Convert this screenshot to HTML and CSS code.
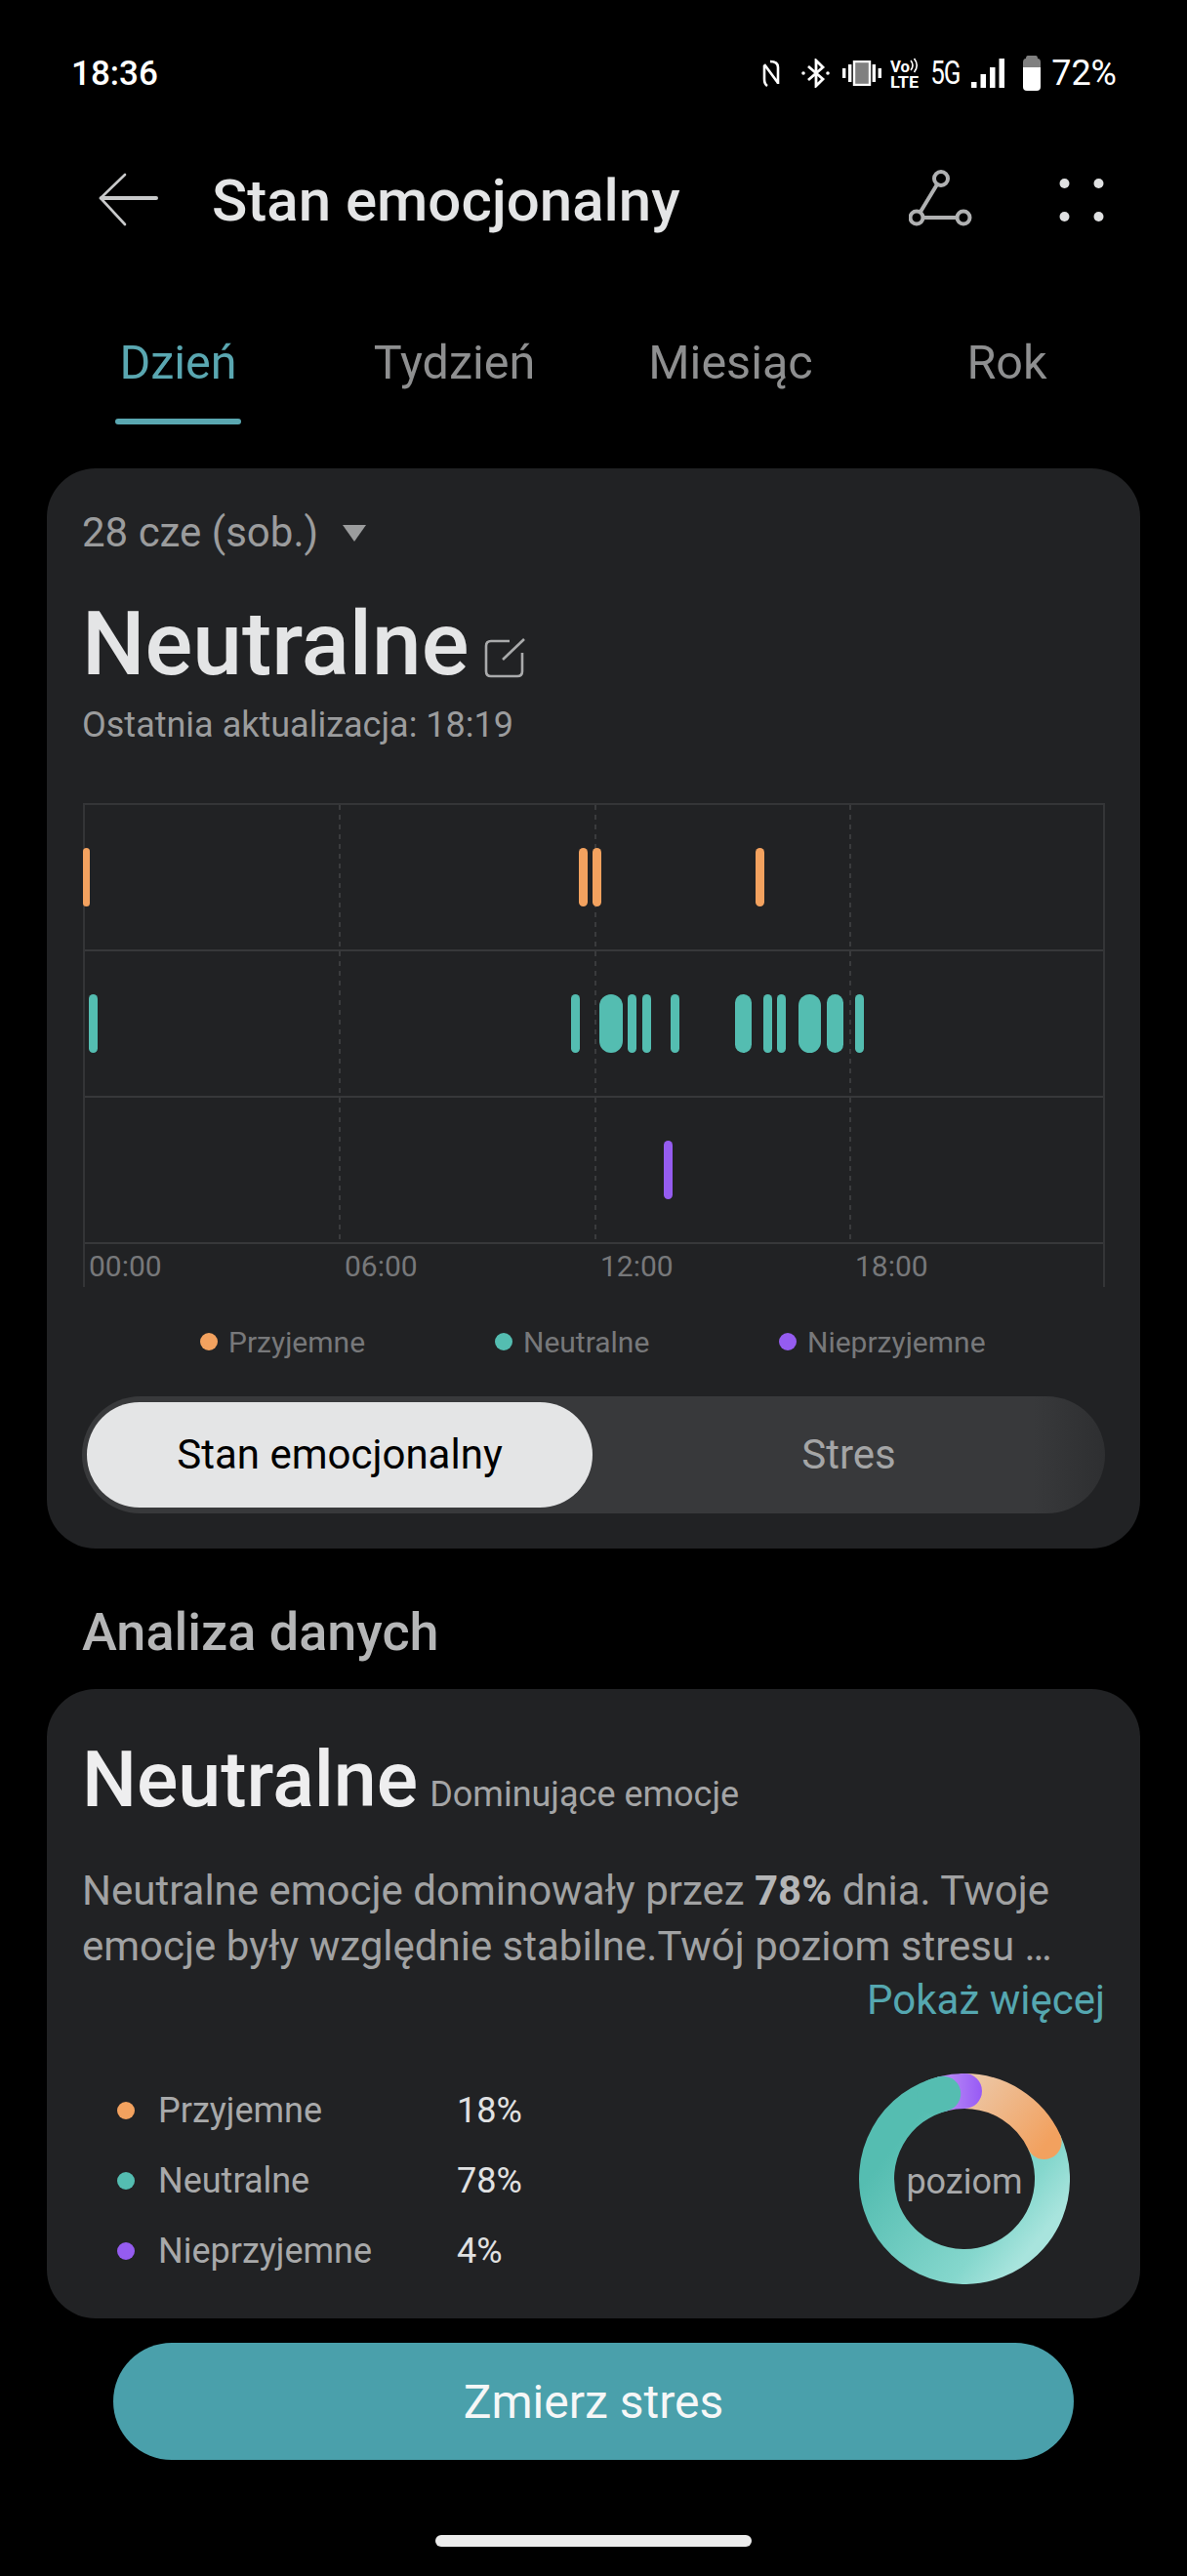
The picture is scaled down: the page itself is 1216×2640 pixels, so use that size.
FILE: index.html
```html
<!DOCTYPE html>
<html lang="pl">
  <head>
    <meta charset="UTF-8" />
    <title>Stan emocjonalny</title>
    <link rel="stylesheet" href="styles.css">
  </head>
  <body>
    <div class="status">
      <span class="time">18:36</span>
      <div class="status-icons">
        <svg class="ic-nfc" width="18" height="28" viewBox="0 0 18 28" fill="none" stroke="#fff" stroke-width="2.6">
          <path d="M2 6V20Q2 25 5 27M2 5L16 24M8 2Q16 2 16 8V25" />
        </svg>
        <svg class="ic-bt" width="29" height="30" viewBox="0 0 29 30" fill="none" stroke="#fff" stroke-width="2.8">
          <path d="M7 8L22 21L15 28V2L22 9L7 22" />
          <circle cx="2" cy="15" r="1.8" fill="#fff" stroke="none" />
          <circle cx="27" cy="15" r="1.8" fill="#fff" stroke="none" />
        </svg>
        <svg class="ic-vib" width="40" height="26" viewBox="0 0 40 26">
          <rect x="12" y="1" width="16" height="24" fill="#808080" stroke="#fff" stroke-width="2.4" />
          <rect x="0" y="8" width="3.4" height="10" fill="#fff" />
          <rect x="6" y="4" width="3.4" height="18" fill="#fff" />
          <rect x="30.6" y="4" width="3.4" height="18" fill="#fff" />
          <rect x="36.6" y="8" width="3.4" height="10" fill="#fff" />
        </svg>
        <svg class="ic-volte" width="29" height="40" viewBox="0 0 29 40">
          <text x="0" y="19" class="volte-text" textLength="20" lengthAdjust="spacingAndGlyphs">Vo</text>
          <text x="0" y="35" class="volte-text" textLength="29" lengthAdjust="spacingAndGlyphs">LTE</text>
          <path d="M21 7Q25 12 21 17M24.500 5Q30 12 24.500 19" fill="none" stroke="#fff" stroke-width="1.6" />
        </svg>
        <span class="fiveg">5G</span>
        <svg class="ic-signal" width="34" height="30" viewBox="0 0 34 30" fill="#fff">
          <rect x="0" y="24" width="5.500" height="6" />
          <rect x="9.500" y="16" width="5.500" height="14" />
          <rect x="19" y="9" width="5.500" height="21" />
          <rect x="28.500" y="0" width="5.500" height="30" />
        </svg>
        <svg class="ic-battery" width="18" height="36" viewBox="0 0 18 36">
          <path d="M5 0H13Q15 0 15 3Q18 3 18 7V12H0V7Q0 3 3 3Q3 0 5 0Z" fill="#808080" />
          <path d="M0 12H18V32Q18 36 14 36H4Q0 36 0 32Z" fill="#fff" />
        </svg>
        <span class="battery-pct">72%</span>
      </div>
    </div>

    <header class="topbar">
      <svg class="back" width="62" height="56" viewBox="0 0 62 56" fill="none" stroke="#c8c9ca" stroke-linecap="round">
        <path d="M3 26H59" stroke-width="4" />
        <path d="M27 2L2 26L27 53" stroke-width="2.6" />
      </svg>
      <h1 class="page-title">Stan emocjonalny</h1>
      <svg class="share" width="66" height="60" viewBox="0 0 66 60" fill="none" stroke="#b0b1b2" stroke-width="4">
        <circle cx="33" cy="10" r="7" />
        <circle cx="8" cy="50" r="6.500" />
        <circle cx="56" cy="50" r="6.500" />
        <path d="M29 16L12 44M15 50H49" />
      </svg>
      <svg class="more" width="46" height="44" viewBox="0 0 46 44" fill="#e0e1e2">
        <circle cx="5.500" cy="5" r="5" />
        <circle cx="40.500" cy="5" r="5" />
        <circle cx="5.500" cy="39" r="5" />
        <circle cx="40.500" cy="39" r="5" />
      </svg>
    </header>

    <nav class="tabs">
      <div class="tab active"><span>Dzień</span></div>
      <div class="tab"><span>Tydzień</span></div>
      <div class="tab"><span>Miesiąc</span></div>
      <div class="tab"><span>Rok</span></div>
    </nav>

    <section class="card card-chart">
      <div class="date">28 cze (sob.)<i class="caret"></i></div>
      <div class="mood">
        <h2 class="mood-name">Neutralne</h2>
        <svg class="edit" width="42" height="41" viewBox="0 0 42 41" fill="none" stroke="#a9aaab" stroke-width="2.600">
          <path d="M26 3H7Q2 3 2 8V34Q2 39 7 39H34Q39 39 39 34V15" />
          <path d="M19 22L41 1" />
        </svg>
      </div>
      <p class="updated">Ostatnia aktualizacja: 18:19</p>

      <div class="chart">
        <div class="vline" style="left: 260px"></div>
        <div class="vline" style="left: 522px"></div>
        <div class="vline" style="left: 783px"></div>
        <div class="row">
          <b class="bar orange" style="left: -2px; width: 7px"></b>
          <b class="bar orange" style="left: 506px; width: 9px"></b>
          <b class="bar orange" style="left: 520px; width: 9px"></b>
          <b class="bar orange" style="left: 687px; width: 9px"></b>
        </div>
        <div class="row">
          <b class="bar teal" style="left: 4px; width: 9px"></b>
          <b class="bar teal" style="left: 498px; width: 9px"></b>
          <b class="bar teal wide" style="left: 527px; width: 24px"></b>
          <b class="bar teal" style="left: 556px; width: 9px"></b>
          <b class="bar teal" style="left: 571px; width: 9px"></b>
          <b class="bar teal" style="left: 600px; width: 9px"></b>
          <b class="bar teal wide" style="left: 666px; width: 17px"></b>
          <b class="bar teal" style="left: 695px; width: 9px"></b>
          <b class="bar teal" style="left: 709px; width: 9px"></b>
          <b class="bar teal wide" style="left: 731px; width: 23px"></b>
          <b class="bar teal wide" style="left: 760px; width: 17px"></b>
          <b class="bar teal" style="left: 789px; width: 9px"></b>
        </div>
        <div class="row">
          <b class="bar purple" style="left: 593px; width: 9px"></b>
        </div>
        <div class="axis">
          <span>00:00</span>
          <span>06:00</span>
          <span>12:00</span>
          <span>18:00</span>
        </div>
      </div>

      <div class="legend">
        <span class="legend-item first"><i class="dot orange"></i>Przyjemne</span>
        <span class="legend-item second"><i class="dot teal"></i>Neutralne</span>
        <span class="legend-item"><i class="dot purple"></i>Nieprzyjemne</span>
      </div>

      <div class="segment">
        <div class="seg-item on">Stan emocjonalny</div>
        <div class="seg-item">Stres</div>
      </div>
    </section>

    <h3 class="section-title">Analiza danych</h3>

    <section class="card card-analysis">
      <div class="dominant">
        <h2 class="dominant-name">Neutralne</h2>
        <span class="dominant-label">Dominujące emocje</span>
      </div>
      <p class="summary">Neutralne emocje dominowały przez <strong>78%</strong> dnia. Twoje<br />emocje były względnie stabilne.Twój poziom stresu …</p>
      <div class="more-link">Pokaż więcej</div>

      <div class="stats">
        <ul class="stat-list">
          <li><i class="dot orange"></i><span class="stat-name">Przyjemne</span><span class="stat-val">18%</span></li>
          <li><i class="dot teal"></i><span class="stat-name">Neutralne</span><span class="stat-val">78%</span></li>
          <li><i class="dot purple"></i><span class="stat-name">Nieprzyjemne</span><span class="stat-val">4%</span></li>
        </ul>
        <div class="donut">
          <svg width="216" height="216" viewBox="0 0 216 216" fill="none" stroke-width="36">
            <defs>
              <linearGradient id="gTeal" gradientUnits="userSpaceOnUse" x1="80" y1="20" x2="216" y2="130">
                <stop offset="0" stop-color="#55bdb1" />
                <stop offset="0.76" stop-color="#85d7cd" />
                <stop offset="1" stop-color="#a8e4dd" />
              </linearGradient>
              <linearGradient id="gOrange" gradientUnits="userSpaceOnUse" x1="110" y1="10" x2="190" y2="75">
                <stop offset="0" stop-color="#ecc8a8" />
                <stop offset="1" stop-color="#f2a15f" />
              </linearGradient>
              <linearGradient id="gPurple" gradientUnits="userSpaceOnUse" x1="85" y1="18" x2="125" y2="18">
                <stop offset="0" stop-color="#bb8ff5" />
                <stop offset="1" stop-color="#985bf5" />
              </linearGradient>
            </defs>
            <path d="M189.600 70A90 90 0 1 1 86.200 20.700" stroke="url(#gTeal)" />
            <path d="M108 18A90 90 0 0 1 189.600 70" stroke="url(#gOrange)" stroke-linecap="round" />
            <path d="M86.200 20.700A90 90 0 0 1 108 18" stroke="url(#gPurple)" stroke-linecap="round" />
            <path d="M77.200 23.400A90 90 0 0 1 86.200 20.700" stroke="#55bdb1" stroke-linecap="round" />
          </svg>
          <span class="donut-label">poziom</span>
        </div>
      </div>
    </section>

    <button class="measure">Zmierz stres</button>
    <div class="home-bar"></div>
  </body>
</html>
```

FILE: styles.css
```css
* {
  box-sizing: border-box;
}
body {
  margin: 0;
  background-color: #000;
  font-family: Roboto, "Noto Sans", sans-serif;
  color: #e4e5e6;
}
h1,
h2,
h3,
p,
ul {
  margin: 0;
  padding: 0;
}

/* status bar */
.status {
  height: 150px;
  padding: 0 72px 0 73px;
  display: flex;
  justify-content: space-between;
  align-items: center;
  color: #fff;
}
.time {
  font-size: 35px;
  font-weight: 500;
}
.status-icons {
  display: flex;
  align-items: center;
}
.status-icons svg {
  flex: none;
}
.ic-bt {
  margin-left: 22px;
}
.ic-vib {
  margin-left: 13px;
}
.ic-volte {
  margin-left: 9px;
}
.fiveg {
  margin-left: 12px;
  width: 31px;
  font-size: 26px;
  letter-spacing: -1px;
  white-space: nowrap;
  transform: scaleY(1.25);
}
.ic-signal {
  margin-left: 11px;
}
.ic-battery {
  margin-left: 19px;
}
.volte-text {
  font-size: 16px;
  font-weight: 700;
  fill: #fff;
}
.battery-pct {
  margin-left: 11px;
  font-size: 36px;
}

/* top bar */
.topbar {
  height: 110px;
  padding: 0 85px 0 101px;
  display: flex;
  align-items: center;
}
.page-title {
  margin-left: 54px;
  flex: 1;
  font-size: 60px;
  font-weight: 500;
}
.share {
  margin-bottom: 4px;
}
.more {
  margin-left: 88px;
}

/* tabs */
.tabs {
  display: grid;
  grid-template-columns: repeat(4, 283px);
  padding: 85px 0 0 41px;
  margin-bottom: 45px;
}
.tab {
  height: 90px;
  text-align: center;
  font-size: 48.500px;
  line-height: 54px;
  color: #8e8f90;
}
.tab span {
  display: inline-block;
  position: relative;
}
.tab.active {
  color: #5aa7b1;
}
.tab.active span::after {
  content: "";
  display: block;
  height: 6px;
  margin: 30px -4px 0;
  border-radius: 3px;
  background-color: #5aa7b1;
}

/* cards */
.card {
  margin: 0 48px;
  padding: 0 36px;
  background-color: #212224;
  border-radius: 50px;
}
.card-chart {
  padding-top: 46px;
  padding-bottom: 36px;
}
.date {
  display: flex;
  align-items: center;
  font-size: 42px;
  line-height: 40px;
  color: #9b9c9d;
}
.caret {
  margin-left: 25px;
  border-left: 12px solid transparent;
  border-right: 12px solid transparent;
  border-top: 17px solid #9b9c9d;
}
.mood {
  margin-top: 44px;
  display: flex;
  align-items: flex-end;
}
.mood-name {
  font-size: 91px;
  line-height: 100px;
  font-weight: 500;
}
.edit {
  margin: 0 0 15px 16px;
}
.updated {
  margin-top: 13px;
  font-size: 36px;
  line-height: 40px;
  color: #9b9c9d;
}

/* chart */
.chart {
  position: relative;
  margin-top: 60px;
  margin-left: 1px;
  width: 1047px;
  border-left: 2px solid #343537;
  border-right: 2px solid #343537;
  border-top: 2px solid #343537;
}
.row {
  position: relative;
  height: 150px;
  border-bottom: 2px solid #37383a;
}
.bar {
  position: absolute;
  top: 44px;
  height: 60px;
  border-radius: 5px;
}
.bar.wide {
  border-radius: 12px;
}
.orange {
  background-color: #f3a25f;
}
.teal {
  background-color: #54bdb1;
}
.purple {
  background-color: #955cf0;
}
.vline {
  position: absolute;
  top: 0;
  bottom: 46px;
  width: 2px;
  background: repeating-linear-gradient(to bottom, #3a3b3d 0, #3a3b3d 5px, transparent 5px, transparent 10px);
}
.axis {
  display: grid;
  grid-template-columns: 262px 262px 261px 262px;
  height: 44px;
  padding-top: 2px;
  font-size: 30px;
  line-height: 42px;
  color: #77787a;
}
.axis span {
  padding-left: 4px;
}
.legend {
  margin-top: 36px;
  height: 40px;
  padding-left: 121px;
  display: flex;
  align-items: center;
  font-size: 30px;
  color: #77787a;
}
.legend-item {
  display: flex;
  align-items: center;
}
.legend-item.first {
  width: 302px;
}
.legend-item.second {
  width: 291px;
}
.legend-item .dot {
  margin-right: 11px;
}
.dot {
  flex: none;
  width: 18px;
  height: 18px;
  border-radius: 50%;
}

/* switch */
.segment {
  margin-top: 36px;
  height: 120px;
  padding: 6px 0 6px 5px;
  display: flex;
  border-radius: 60px;
  background: linear-gradient(to right, #38393b 93%, #2e2f31 100%);
}
.seg-item {
  flex: 1;
  text-align: center;
  font-size: 42px;
  line-height: 108px;
  color: #a4a5a6;
}
.seg-item.on {
  flex: none;
  width: 518px;
  border-radius: 54px;
  background-color: #e4e5e6;
  color: #000;
}

/* analysis */
.section-title {
  margin: 56px 0 28px 84px;
  font-size: 54px;
  line-height: 60px;
  font-weight: 500;
  color: #b5b6b7;
}
.card-analysis {
  padding-top: 48px;
  padding-bottom: 33px;
}
.dominant {
  display: flex;
  align-items: baseline;
  gap: 12px;
}
.dominant-name {
  font-size: 79px;
  line-height: 90px;
  font-weight: 500;
  color: #eeeeef;
}
.dominant-label {
  font-size: 36px;
  color: #a4a5a6;
}
.summary {
  margin-top: 40px;
  font-size: 42px;
  line-height: 57px;
  color: #a1a2a3;
  white-space: nowrap;
}
.summary strong {
  font-weight: 700;
  color: #b4b5b6;
}
.more-link {
  text-align: right;
  font-size: 42px;
  line-height: 54px;
  color: #55a7b0;
}
.stats {
  margin-top: 48px;
  display: flex;
  justify-content: space-between;
}
.stat-list {
  list-style: none;
  padding: 2px 0 0 36px;
}
.stat-list li {
  height: 72px;
  display: flex;
  align-items: center;
  font-size: 36px;
}
.stat-name {
  margin-left: 24px;
  width: 306px;
  color: #a8a9aa;
}
.stat-val {
  color: #e0e1e2;
}
.donut {
  position: relative;
  width: 216px;
  height: 216px;
  margin-right: 36px;
}
.donut svg {
  display: block;
}
.donut-label {
  position: absolute;
  left: 0;
  right: 0;
  top: 88px;
  text-align: center;
  font-size: 36px;
  line-height: 46px;
  color: #a8a9aa;
}

/* bottom */
.measure {
  display: block;
  width: 984px;
  height: 120px;
  margin: 25px 0 0 116px;
  border: none;
  border-radius: 60px;
  background-color: #4aa0ab;
  color: #f6f7f7;
  font-family: inherit;
  font-size: 48px;
}
.home-bar {
  width: 324px;
  height: 12px;
  margin: 77px 0 0 446px;
  border-radius: 6px;
  background-color: #ececec;
}
```
